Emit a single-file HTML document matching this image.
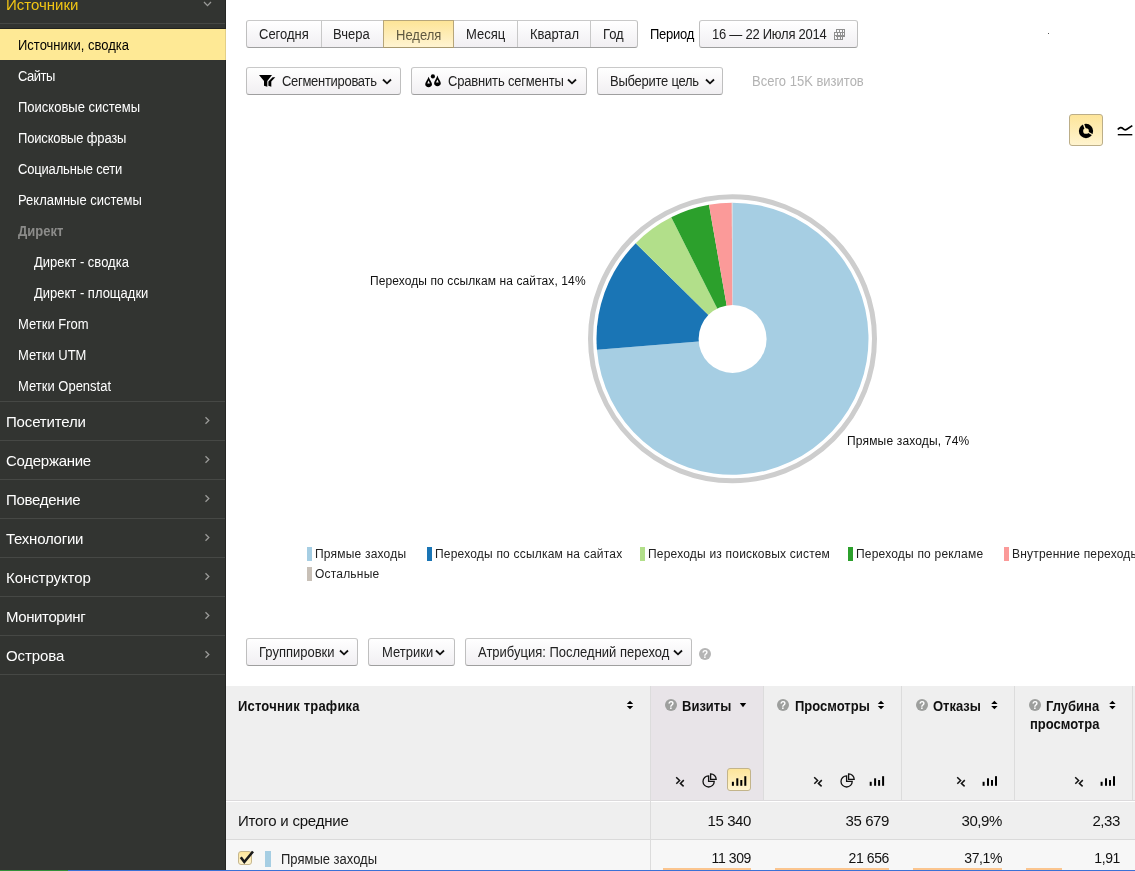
<!DOCTYPE html>
<html><head><meta charset="utf-8">
<style>
*{margin:0;padding:0;box-sizing:border-box}
html,body{width:1135px;height:871px;overflow:hidden;background:#fff;font-family:"Liberation Sans",sans-serif;color:#000}
.abs{position:absolute}
#side{position:absolute;left:0;top:0;width:226px;height:871px;background:#323431;border-right:1px solid #252624}
.si{position:absolute;left:18px;font-size:13px;color:#fff;white-space:nowrap;line-height:16px}
.sg{position:absolute;left:6px;font-size:15px;color:#fff;white-space:nowrap;line-height:18px}
.sep{position:absolute;left:0;width:225px;height:1px;background:#464845}
.chev{position:absolute;left:203px;width:6px;height:6px;border-right:1px solid #9a9a98;border-bottom:1px solid #9a9a98;transform:rotate(-45deg)}
.btn{position:absolute;height:28px;border:1px solid #bfbfbf;border-top-color:#c9c9c9;border-bottom-color:#9f9f9f;border-radius:3px;background:linear-gradient(#fff,#f1eff2);font-size:13px;line-height:26px;color:#222;white-space:nowrap}
.bs{position:absolute;width:1px;height:26px;background:#c8c8c8}
.t13{position:absolute;font-size:13px;line-height:16px;color:#222;white-space:nowrap}
.t12{position:absolute;font-size:12px;line-height:15px;color:#222;white-space:nowrap}
.chv{position:absolute}
.lg{color:#222;letter-spacing:0.2px;margin-top:1px}
.th{position:absolute;font-size:13px;line-height:16px;font-weight:bold;color:#111;white-space:nowrap}
.num{position:absolute;text-align:right;line-height:18px;color:#111;white-space:nowrap;letter-spacing:-0.4px}
.si,.t13,.th,.sy{transform:scaleY(1.1);transform-origin:0 12.5px}
.sg2{transform:scaleY(1.0);transform-origin:0 14px}
</style></head><body><div id="root" style="position:absolute;left:0;top:0;width:1135px;height:871px;overflow:hidden;will-change:transform;background:#fff">
<div id="side">
  <div class="sg" style="top:-4px;color:#f1c514;font-size:15px">Источники</div>
  <svg class="abs" style="left:200px;top:0" width="14" height="10"><path d="M4,2 L7.5,5.6 L11,2" fill="none" stroke="#9b9b99" stroke-width="1.3"/></svg>
  <div class="sep" style="top:23px"></div>
  <div class="abs" style="left:0;top:28px;width:225px;height:1px;background:#222320"></div>
  <div class="abs" style="left:0;top:29px;width:226px;height:31px;background:#fee995;border-right:1px solid #e3cf86;z-index:2"></div>
  <div class="si" style="top:38px;color:#000;z-index:3">Источники, сводка</div>
  <div class="si" style="top:69px;letter-spacing:-0.5px">Сайты</div>
  <div class="si" style="top:100px">Поисковые системы</div>
  <div class="si" style="top:131px;letter-spacing:-0.17px">Поисковые фразы</div>
  <div class="si" style="top:162px;letter-spacing:-0.18px">Социальные сети</div>
  <div class="si" style="top:193px">Рекламные системы</div>
  <div class="si" style="top:224px;color:#8c8c8a;font-weight:bold">Директ</div>
  <div class="si" style="top:255px;left:34px">Директ - сводка</div>
  <div class="si" style="top:286px;left:34px">Директ - площадки</div>
  <div class="si" style="top:317px">Метки From</div>
  <div class="si" style="top:348px">Метки UTM</div>
  <div class="si" style="top:379px">Метки Openstat</div>
  <div class="sep" style="top:401px"></div>
  <div class="sg sg2" style="top:413px;letter-spacing:-0.16px">Посетители</div><svg class="abs" style="left:200px;top:401px" width="14" height="38"><path d="M5.5,16.3 L8.8,19.5 L5.5,22.7" fill="none" stroke="#9b9b99" stroke-width="1.3"/></svg>
  <div class="sep" style="top:440px"></div>
  <div class="sg sg2" style="top:452px;letter-spacing:-0.28px">Содержание</div><svg class="abs" style="left:200px;top:440px" width="14" height="38"><path d="M5.5,16.3 L8.8,19.5 L5.5,22.7" fill="none" stroke="#9b9b99" stroke-width="1.3"/></svg>
  <div class="sep" style="top:479px"></div>
  <div class="sg sg2" style="top:491px;letter-spacing:-0.3px">Поведение</div><svg class="abs" style="left:200px;top:479px" width="14" height="38"><path d="M5.5,16.3 L8.8,19.5 L5.5,22.7" fill="none" stroke="#9b9b99" stroke-width="1.3"/></svg>
  <div class="sep" style="top:518px"></div>
  <div class="sg sg2" style="top:530px;letter-spacing:-0.24px">Технологии</div><svg class="abs" style="left:200px;top:518px" width="14" height="38"><path d="M5.5,16.3 L8.8,19.5 L5.5,22.7" fill="none" stroke="#9b9b99" stroke-width="1.3"/></svg>
  <div class="sep" style="top:557px"></div>
  <div class="sg sg2" style="top:569px;letter-spacing:-0.07px">Конструктор</div><svg class="abs" style="left:200px;top:557px" width="14" height="38"><path d="M5.5,16.3 L8.8,19.5 L5.5,22.7" fill="none" stroke="#9b9b99" stroke-width="1.3"/></svg>
  <div class="sep" style="top:596px"></div>
  <div class="sg sg2" style="top:608px;letter-spacing:-0.39px">Мониторинг</div><svg class="abs" style="left:200px;top:596px" width="14" height="38"><path d="M5.5,16.3 L8.8,19.5 L5.5,22.7" fill="none" stroke="#9b9b99" stroke-width="1.3"/></svg>
  <div class="sep" style="top:635px"></div>
  <div class="sg sg2" style="top:647px;letter-spacing:-0.09px">Острова</div><svg class="abs" style="left:200px;top:635px" width="14" height="38"><path d="M5.5,16.3 L8.8,19.5 L5.5,22.7" fill="none" stroke="#9b9b99" stroke-width="1.3"/></svg>
  <div class="sep" style="top:674px"></div>
</div>


<!-- MAIN -->
<!--MAINSTART-->
<!-- ROW1 -->
<div class="btn" style="left:246px;top:20px;width:392px"></div>
<div class="bs" style="left:321px;top:21px"></div>
<div class="bs" style="left:517px;top:21px"></div>
<div class="bs" style="left:590px;top:21px"></div>
<div class="abs" style="left:383px;top:20px;width:71px;height:28px;border:1px solid #b7a67a;border-bottom-color:#a8996f;background:linear-gradient(#fde497,#fff4d2)"></div>
<div class="t13" style="left:259px;top:27px">Сегодня</div>
<div class="t13" style="left:333px;top:27px">Вчера</div>
<div class="t13" style="left:396px;top:28px;color:#5f5840">Неделя</div>
<div class="t13" style="left:466px;top:27px">Месяц</div>
<div class="t13" style="left:530px;top:27px">Квартал</div>
<div class="t13" style="left:603px;top:27px">Год</div>
<div class="t13" style="left:650px;top:27px;color:#000;letter-spacing:-0.25px">Период</div>
<div class="btn" style="left:699px;top:20px;width:159px"></div>
<div class="t13" style="left:712px;top:27px;letter-spacing:-0.25px">16 — 22 Июля 2014</div>
<svg class="abs" style="left:833px;top:28px" width="14" height="14" viewBox="833 28 14 14" shape-rendering="crispEdges"><g fill="#8f8f8f">
<rect x="836" y="29" width="9" height="1"/><rect x="836" y="29" width="1" height="3"/><rect x="839" y="29" width="1" height="3"/><rect x="842" y="29" width="1" height="8"/><rect x="844" y="29" width="1" height="8"/>
<rect x="834" y="32" width="11" height="1"/><rect x="834" y="35" width="11" height="1"/><rect x="834" y="39" width="9" height="1"/>
<rect x="834" y="32" width="1" height="8"/><rect x="837" y="32" width="1" height="8"/><rect x="840" y="32" width="1" height="8"/><rect x="842" y="35" width="1" height="5"/>
<rect x="836" y="36" width="9" height="1"/></g></svg>
<div class="abs" style="left:1048px;top:33px;width:1px;height:1px;background:#555"></div>

<!-- ROW2 -->
<div class="btn" style="left:246px;top:67px;width:155px"></div>
<svg class="abs" style="left:256px;top:72px" width="22" height="18" viewBox="256 72 22 18">
 <path d="M259,75 L272,75 L267.3,81 L267.3,86.8 L264,85.8 L264,81 Z M272.6,77.2 L275.3,77.2 L271.3,81.5 L271.3,86.8 L268.4,85.8 L268.4,81.5 Z" fill="#000"/>
</svg>
<div class="t13" style="left:282px;top:74px;letter-spacing:-0.3px">Сегментировать</div>
<svg class="chv" style="left:382px;top:78px" width="10" height="7"><path d="M1,1.5 L5,5.3 L9,1.5" fill="none" stroke="#111" stroke-width="1.8"/></svg>

<div class="btn" style="left:411px;top:67px;width:176px"></div>
<svg class="abs" style="left:422px;top:72px" width="22" height="18" viewBox="422 72 22 18">
 <path d="M428.6,76.8 C427.5,80 425.2,82.5 425.2,84.3 C425.2,86 426.7,87.2 428.6,87.2 C430.5,87.2 432,86 432,84.3 C432,82.5 429.7,80 428.6,76.8 Z M428.6,80.6 L427.3,83.6 L429.9,83.6 Z" fill="#000" fill-rule="evenodd"/>
 <path d="M437.4,75.6 C436.3,79 434.1,81.5 434.1,83.3 C434.1,85 435.6,86.2 437.4,86.2 C439.3,86.2 440.8,85 440.8,83.3 C440.8,81.5 438.5,79 437.4,75.6 Z M437.4,79.4 L436,82.6 L438.8,82.6 Z" fill="#000" fill-rule="evenodd"/>
 <circle cx="432.9" cy="76.4" r="2.1" fill="#000"/>
</svg>
<div class="t13" style="left:448px;top:74px;letter-spacing:-0.18px">Сравнить сегменты</div>
<svg class="chv" style="left:567px;top:78px" width="10" height="7"><path d="M1,1.5 L5,5.3 L9,1.5" fill="none" stroke="#111" stroke-width="1.8"/></svg>

<div class="btn" style="left:597px;top:67px;width:126px"></div>
<div class="t13" style="left:610px;top:74px;letter-spacing:-0.25px">Выберите цель</div>
<svg class="chv" style="left:705px;top:78px" width="10" height="7"><path d="M1,1.5 L5,5.3 L9,1.5" fill="none" stroke="#111" stroke-width="1.8"/></svg>
<div class="t13" style="left:752px;top:74px;color:#b3b3b3">Всего 15K визитов</div>

<!-- chart type -->
<div class="abs" style="left:1069px;top:114px;width:34px;height:32px;border:1px solid #bcae88;border-radius:3px;background:linear-gradient(#fde59a,#fff4cf)"></div>
<svg class="abs" style="left:1075px;top:120px" width="22" height="22" viewBox="1075 120 22 22">
 <circle cx="1086" cy="131" r="5" fill="none" stroke="#000" stroke-width="4.3"/>
 <path d="M1086,131 L1083.3,123.5 M1086,131 L1092.9,135" stroke="#feefbd" stroke-width="1.4"/>
</svg>
<svg class="abs" style="left:1114px;top:120px" width="21" height="20" viewBox="1114 120 21 20">
 <path d="M1117.8,129.5 C1119.5,127.2 1121.5,127 1123,128.6 C1124.3,130 1125.3,130.3 1126.8,129.2 L1132.3,125.6" fill="none" stroke="#000" stroke-width="1.7"/>
 <path d="M1117.8,134.7 H1132.3" stroke="#000" stroke-width="1.4"/>
</svg>

<!-- PIE -->
<svg class="abs" style="left:0;top:0" width="1135" height="871">
  <circle cx="732.5" cy="338.8" r="142" fill="none" stroke="#cdcdcd" stroke-width="5"/>
  <g id="pie"><path d="M732.5,338.8 L732.50,202.80 A136,136 0 1 1 596.95,349.83 Z" fill="#a6cee3"/><path d="M732.5,338.8 L596.95,349.83 A136,136 0 0 1 635.73,243.24 Z" fill="#1a75b5"/><path d="M732.5,338.8 L635.73,243.24 A136,136 0 0 1 671.27,217.37 Z" fill="#b2df8a"/><path d="M732.5,338.8 L671.27,217.37 A136,136 0 0 1 708.98,204.85 Z" fill="#2ca02c"/><path d="M732.5,338.8 L708.98,204.85 A136,136 0 0 1 731.79,202.80 Z" fill="#fb9a99"/><path d="M732.5,338.8 L731.79,202.80 A136,136 0 0 1 732.50,202.80 Z" fill="#cdd0d6"/></g>
  <circle cx="732.6" cy="338.9" r="34" fill="#fff"/>
</svg>
<div class="t12" style="left:370px;top:274px;color:#111;letter-spacing:0.1px">Переходы по ссылкам на сайтах, 14%</div>
<div class="t12" style="left:847px;top:434px;color:#111;letter-spacing:0.17px">Прямые заходы, 74%</div>

<!-- LEGEND -->
<div class="abs" style="left:307px;top:547px;width:5px;height:14px;background:#a6cee3"></div>
<div class="t12 lg" style="left:315px;top:546px">Прямые заходы</div>
<div class="abs" style="left:427px;top:547px;width:5px;height:14px;background:#1a75b5"></div>
<div class="t12 lg" style="left:435px;top:546px">Переходы по ссылкам на сайтах</div>
<div class="abs" style="left:640px;top:547px;width:5px;height:14px;background:#b2df8a"></div>
<div class="t12 lg" style="left:648px;top:546px">Переходы из поисковых систем</div>
<div class="abs" style="left:848px;top:547px;width:5px;height:14px;background:#2ca02c"></div>
<div class="t12 lg" style="left:856px;top:546px">Переходы по рекламе</div>
<div class="abs" style="left:1004px;top:547px;width:5px;height:14px;background:#fb9a99"></div>
<div class="t12 lg" style="left:1012px;top:546px">Внутренние переходы</div>
<div class="abs" style="left:307px;top:567px;width:5px;height:14px;background:#c8c0b7"></div>
<div class="t12 lg" style="left:315px;top:566px">Остальные</div>

<!-- BOTTOM BUTTONS -->
<div class="btn" style="left:246px;top:638px;width:112px"></div>
<div class="t13" style="left:259px;top:645px">Группировки</div>
<svg class="chv" style="left:339px;top:649px" width="10" height="7"><path d="M1,1.5 L5,5.3 L9,1.5" fill="none" stroke="#111" stroke-width="1.8"/></svg>
<div class="btn" style="left:368px;top:638px;width:87px"></div>
<div class="t13" style="left:382px;top:645px">Метрики</div>
<svg class="chv" style="left:435px;top:649px" width="10" height="7"><path d="M1,1.5 L5,5.3 L9,1.5" fill="none" stroke="#111" stroke-width="1.8"/></svg>
<div class="btn" style="left:465px;top:638px;width:227px"></div>
<div class="t13" style="left:478px;top:645px">Атрибуция: Последний переход</div>
<svg class="chv" style="left:673px;top:649px" width="10" height="7"><path d="M1,1.5 L5,5.3 L9,1.5" fill="none" stroke="#111" stroke-width="1.8"/></svg>
<svg class="abs" style="left:698px;top:647px" width="14" height="14" viewBox="0 0 14 14"><circle cx="7" cy="7" r="6" fill="#b5b5b5"/><text x="7" y="11" font-family="Liberation Sans" font-weight="bold" font-size="10" fill="#fff" text-anchor="middle">?</text></svg>
<!-- TABLE -->
<div class="abs" style="left:226px;top:686px;width:909px;height:114px;background:#efefef"></div>
<div class="abs" style="left:651px;top:686px;width:112px;height:114px;background:#e8e4e8"></div>
<div class="abs" style="left:650px;top:686px;width:1px;height:114px;background:#dcdcdc"></div>
<div class="abs" style="left:763px;top:686px;width:1px;height:114px;background:#dcdcdc"></div>
<div class="abs" style="left:901px;top:686px;width:1px;height:114px;background:#dcdcdc"></div>
<div class="abs" style="left:1014px;top:686px;width:1px;height:114px;background:#dcdcdc"></div>
<div class="abs" style="left:1132px;top:686px;width:1px;height:114px;background:#dcdcdc"></div>
<div class="abs" style="left:226px;top:800px;width:909px;height:1px;background:#dcdadc"></div>
<div class="abs" style="left:226px;top:801px;width:909px;height:1px;background:#fff"></div><div class="abs" style="left:226px;top:802px;width:909px;height:37px;background:#efefef"></div>
<div class="abs" style="left:226px;top:839px;width:909px;height:1px;background:#dadada"></div>
<div class="abs" style="left:226px;top:840px;width:909px;height:30px;background:#f7f7f7"></div>
<div class="abs" style="left:650px;top:801px;width:1px;height:69px;background:#dcdcdc"></div>

<div class="th" style="left:238px;top:699px;letter-spacing:0.2px">Источник трафика</div>
<svg class="abs" style="left:624px;top:698px" width="12" height="14" viewBox="624 698 12 14"><path d="M626.8,704 L630,700.8 L633.2,704 Z M626.8,706 L633.2,706 L630,709.2 Z" fill="#000"/></svg>

<svg class="abs" style="left:664px;top:698px" width="14" height="14" viewBox="0 0 14 14"><circle cx="7" cy="7" r="6" fill="#9d9f9d"/><text x="7" y="11" font-family="Liberation Sans" font-weight="bold" font-size="10" fill="#fff" text-anchor="middle">?</text></svg>
<div class="th" style="left:682px;top:699px">Визиты</div>
<svg class="abs" style="left:738px;top:700px" width="10" height="10" viewBox="738 700 10 10"><path d="M739.8,703 L746.2,703 L743,707.2 Z" fill="#000"/></svg>

<svg class="abs" style="left:776px;top:698px" width="14" height="14" viewBox="0 0 14 14"><circle cx="7" cy="7" r="6" fill="#9d9f9d"/><text x="7" y="11" font-family="Liberation Sans" font-weight="bold" font-size="10" fill="#fff" text-anchor="middle">?</text></svg>
<div class="th" style="left:795px;top:699px">Просмотры</div>
<svg class="abs" style="left:875px;top:698px" width="12" height="14" viewBox="875 698 12 14"><path d="M877.8,704 L881,700.8 L884.2,704 Z M877.8,706 L884.2,706 L881,709.2 Z" fill="#000"/></svg>

<svg class="abs" style="left:915px;top:698px" width="14" height="14" viewBox="0 0 14 14"><circle cx="7" cy="7" r="6" fill="#9d9f9d"/><text x="7" y="11" font-family="Liberation Sans" font-weight="bold" font-size="10" fill="#fff" text-anchor="middle">?</text></svg>
<div class="th" style="left:933px;top:699px">Отказы</div>
<svg class="abs" style="left:989px;top:698px" width="12" height="14" viewBox="989 698 12 14"><path d="M991.2,704 L994.4,700.8 L997.6,704 Z M991.2,706 L997.6,706 L994.4,709.2 Z" fill="#000"/></svg>

<svg class="abs" style="left:1028px;top:698px" width="14" height="14" viewBox="0 0 14 14"><circle cx="7" cy="7" r="6" fill="#9d9f9d"/><text x="7" y="11" font-family="Liberation Sans" font-weight="bold" font-size="10" fill="#fff" text-anchor="middle">?</text></svg>
<div class="th" style="left:1046px;top:699px">Глубина</div>
<div class="th" style="left:1030px;top:717px">просмотра</div>
<svg class="abs" style="left:1106px;top:698px" width="12" height="14" viewBox="1106 698 12 14"><path d="M1109.2,704 L1112.4,700.8 L1115.6,704 Z M1109.2,706 L1115.6,706 L1112.4,709.2 Z" fill="#000"/></svg>

<!-- column view icons -->
<svg class="abs" style="left:0;top:0" width="1135" height="871">
 <defs>
  <g id="ix"><path d="M6.2,7.3 L9.6,10.5 L6.3,13.8 M13.8,10.1 L10.4,13.4 L13.6,16.4" fill="none" stroke="#111" stroke-width="1.5"/></g>
  <g id="ipie"><path d="M8.6,5.8 L8.6,11.4 L14.2,11.4 A5.6,5.6 0 1 1 8.6,5.8 Z M10.6,3.8 V9.4 H16.2 A5.6,5.6 0 0 0 10.6,3.8 Z" fill="none" stroke="#111" stroke-width="1.3"/></g>
  <g id="ibar"><rect x="0" y="5.6" width="2" height="4" fill="#000"/><rect x="4.4" y="2.1" width="2" height="7.5" fill="#000"/><rect x="8.4" y="3.8" width="2" height="5.8" fill="#000"/><rect x="12.4" y="0" width="2" height="9.6" fill="#000"/></g>
 </defs>
 <use href="#ix" x="670" y="770"/>
 <use href="#ipie" x="700" y="770"/>
 <use href="#ix" x="808" y="770"/>
 <use href="#ipie" x="838" y="770"/>
 <use href="#ibar" x="869.7" y="776.2"/>
 <use href="#ix" x="951" y="770"/>
 <use href="#ibar" x="982.6" y="776.2"/>
 <use href="#ix" x="1069" y="770"/>
 <use href="#ibar" x="1100.6" y="776.2"/>
</svg>
<div class="abs" style="left:727px;top:768px;width:24px;height:23px;border:1px solid #c3b48a;border-radius:3px;background:linear-gradient(#fde59a,#fff4cf)"></div>
<svg class="abs" style="left:0;top:0" width="1135" height="871"><use href="#ibar" x="731.9" y="776.2"/></svg>

<!-- totals -->
<div class="abs sg2" style="left:238px;top:812px;font-size:15px;line-height:18px;color:#111;letter-spacing:-0.2px">Итого и средние</div>
<div class="num sg2" style="left:600px;top:812px;width:151px;font-size:15px">15 340</div>
<div class="num sg2" style="left:760px;top:812px;width:129px;font-size:15px">35 679</div>
<div class="num sg2" style="left:900px;top:812px;width:102px;font-size:15px">30,9%</div>
<div class="num sg2" style="left:1015px;top:812px;width:105px;font-size:15px">2,33</div>

<!-- row -->
<div class="abs" style="left:238px;top:851px;width:14px;height:14px;border:1px solid #c7b78d;border-radius:3px;background:linear-gradient(#fde59a,#fff4cf)"></div>
<svg class="abs" style="left:236px;top:847px" width="20" height="20" viewBox="236 847 20 20"><path d="M240.8,857.2 L244.3,862 L253,851.5" fill="none" stroke="#1a1a1a" stroke-width="2.6"/></svg>
<div class="abs" style="left:265px;top:851px;width:6px;height:16px;background:#a6cee3"></div>
<div class="abs sy" style="left:281px;top:852px;font-size:13px;line-height:16px;color:#222">Прямые заходы</div>
<div class="num" style="left:600px;top:849px;width:151px;font-size:14px">11 309</div>
<div class="num" style="left:760px;top:849px;width:129px;font-size:14px">21 656</div>
<div class="num" style="left:900px;top:849px;width:102px;font-size:14px">37,1%</div>
<div class="num" style="left:1015px;top:849px;width:105px;font-size:14px">1,91</div>
<div class="abs" style="left:663px;top:868px;width:88px;height:2px;background:#fbc58f"></div>
<div class="abs" style="left:775px;top:868px;width:114px;height:2px;background:#fbc58f"></div>
<div class="abs" style="left:913px;top:868px;width:89px;height:2px;background:#fbc58f"></div>
<div class="abs" style="left:1026px;top:868px;width:36px;height:2px;background:#fbc58f"></div>

<div class="abs" style="left:0;top:870px;width:1135px;height:1px;background:#3a71d6"></div>
<div class="abs" style="left:0;top:870px;width:68px;height:1px;background:#33903a"></div>


</div></body></html>
